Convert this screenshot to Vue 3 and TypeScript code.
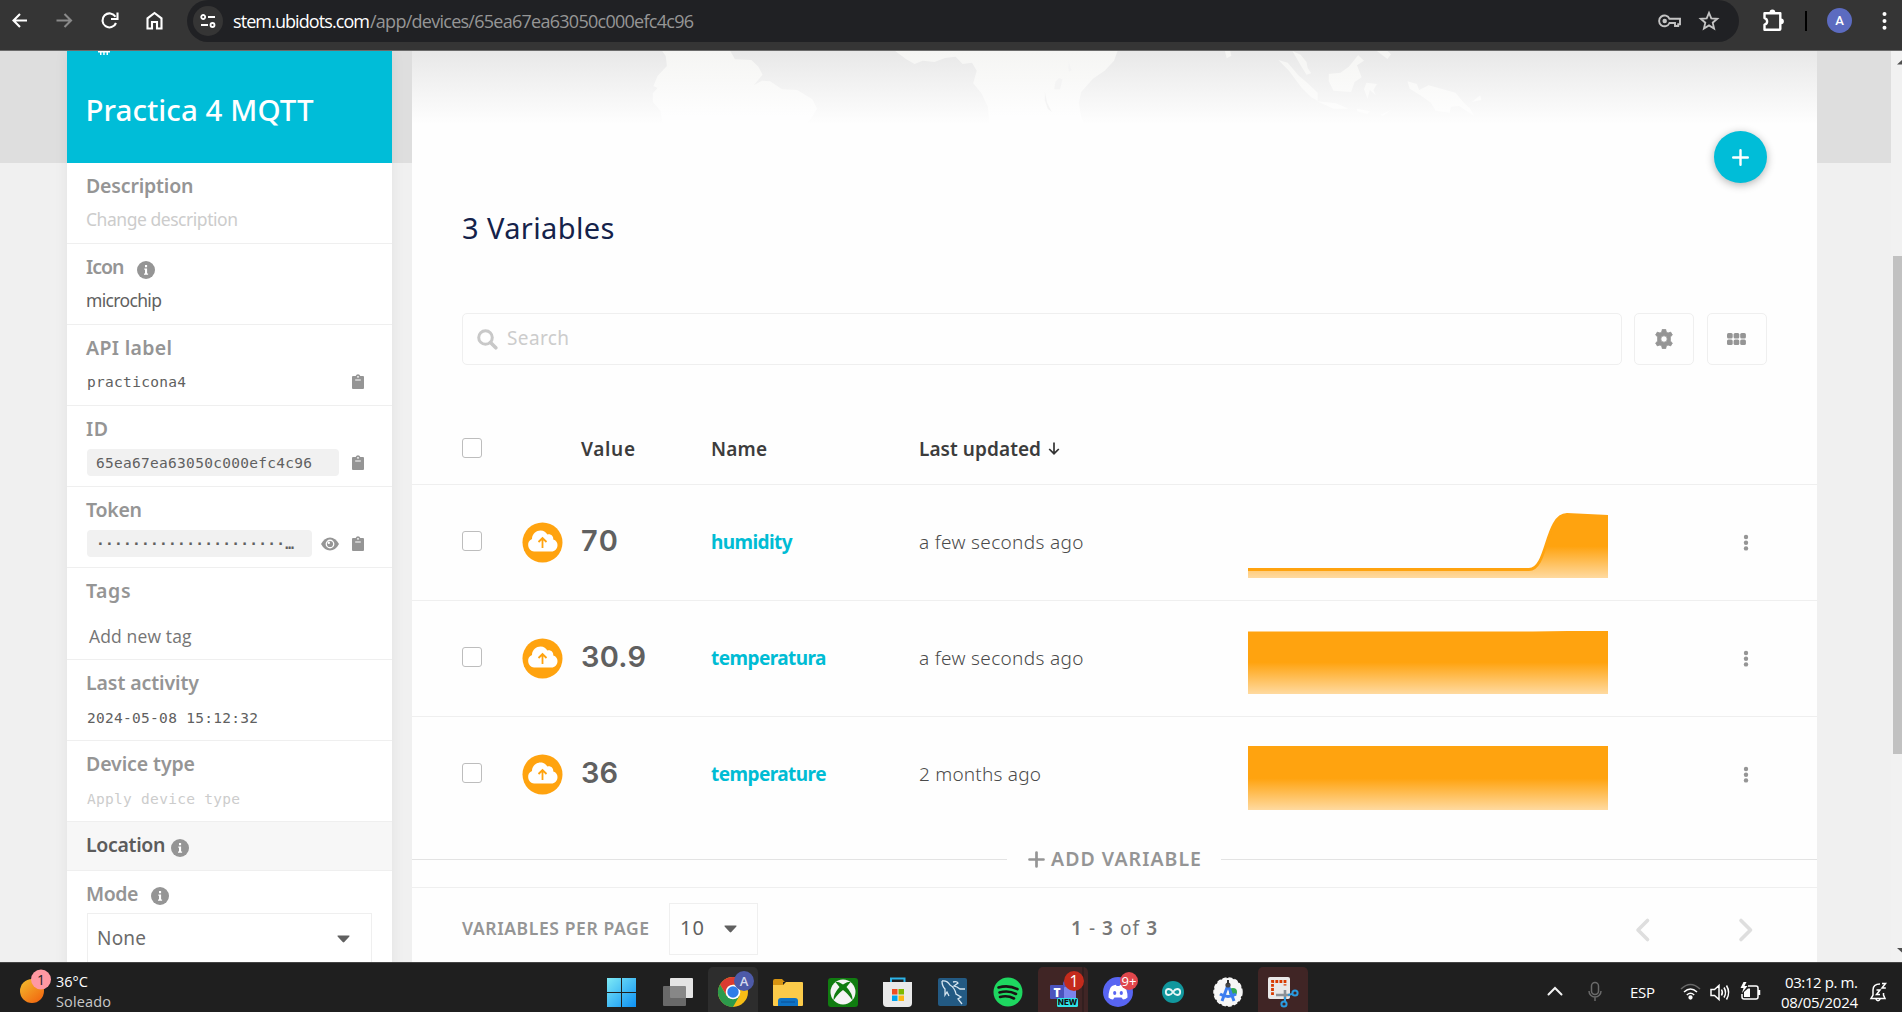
<script setup lang="ts">
interface Variable {
  value: string
  valueWidth: number
  name: string
  nameWidth: number
  updated: string
  updatedWidth: number
  area: string
  line: string
}

/* Tracks a label so that it fills the given width. */
const vFit = {
  mounted(el: HTMLElement, binding: { value: number }) {
    const count = (el.textContent ?? '').length
    if (count < 2) return
    const spacing = (binding.value - el.getBoundingClientRect().width) / (count - 1)
    el.style.letterSpacing = `${spacing.toFixed(3)}px`
    el.style.marginRight = `${(-spacing).toFixed(3)}px`
  },
}

const variables: Variable[] = [
  {
    value: '70', valueWidth: 37, name: 'humidity', nameWidth: 81.5, updated: 'a few seconds ago', updatedWidth: 164.5,
    area: 'M0 57.500H281C300 57.500 297 3 319 2.500L360 4.500V66H0Z',
    line: 'M0 57.500H281C300 57.500 297 3 319 2.500L360 4.500',
  },
  {
    value: '30.9', valueWidth: 65, name: 'temperatura', nameWidth: 115.5, updated: 'a few seconds ago', updatedWidth: 164.5,
    area: 'M0 5H285L320 4.500H360V66H0Z',
    line: 'M0 5H285L320 4.500H360',
  },
  {
    value: '36', valueWidth: 37, name: 'temperature', nameWidth: 115.5, updated: '2 months ago', updatedWidth: 122,
    area: 'M0 3.500H360V66H0Z',
    line: 'M0 3.500H360',
  },
]
</script>

<template>
  <div class="screen">
    <header class="toolbar">
      <svg class="nav" width="187" height="50" viewBox="0 0 187 50" fill="none" stroke="#fff" stroke-width="2.1">
        <path d="M27 20.500H14M20 14l-6.500 6.500L20 27" />
        <path d="M56.500 20.500H70M64.500 14l6.500 6.500-6.500 6.500" stroke="#8a8a8a" />
        <path d="M115.500 16.800A7 7 0 1 0 116 23" />
        <path d="M117.500 12.500v6.500h-6.500" />
        <path d="M147.500 28.500V18.300l7-5.300 7 5.300v10.200h-4.500v-6.500h-5v6.500z" />
      </svg>
      <div class="omnibox">
        <span class="site">
          <svg width="16" height="14" viewBox="0 0 16 14" fill="none" stroke="#fff" stroke-width="1.8">
            <circle cx="3.200" cy="3" r="2" /><path d="M8 3h7M1 11h7" /><circle cx="12.500" cy="11" r="2" />
          </svg>
        </span>
        <span v-fit="137" class="host">stem.ubidots.com</span><span v-fit="324" class="path">/app/devices/65ea67ea63050c000efc4c96</span>
        <svg class="key" width="24" height="14" viewBox="0 0 24 14" fill="none" stroke="#c4c4c4" stroke-width="1.900">
          <path d="M11.500 4.800H22v5.400h-1.800V12H17v-3h-5.500A5.400 5.400 0 1 1 11.500 4.800Z" /><circle cx="6.700" cy="6.900" r="1.300" fill="#c4c4c4" />
        </svg>
        <svg class="star" width="22" height="22" viewBox="0 0 22 22" fill="none" stroke="#c4c4c4" stroke-width="1.800">
          <path d="M11 2.800l2.300 5.500 6 .5-4.600 3.900 1.400 5.800-5.100-3.100-5.100 3.100 1.400-5.800-4.600-3.900 6-.5z" />
        </svg>
      </div>
      <svg class="tools" width="163" height="50" viewBox="0 0 163 50">
        <path d="M25.500 13.200h15.800v15.800q0 .8-.8.800H25.500v-5.100c3.500-1 3.500-5.600 0-6.600z" fill="none" stroke="#fff" stroke-width="2.400" stroke-linejoin="round" />
        <path d="M30.500 12.500a2.900 2.900 0 0 1 5.800 0zM42 18.400a2.900 2.900 0 0 1 0 5.800z" fill="#fff" />
        <rect x="66" y="11" width="2" height="20" fill="#000" />
        <circle cx="100.500" cy="20.500" r="12.500" fill="#5c6bc0" />
        <g fill="#fff"><circle cx="145.500" cy="14" r="2" /><circle cx="145.500" cy="21" r="2" /><circle cx="145.500" cy="27.700" r="2" /></g>
        <text x="100.500" y="25.300" text-anchor="middle" class="avatar">A</text>
      </svg>
    </header>

    <div class="page">
      <aside class="sidebar">
        <div class="device">
          <svg class="chip" width="14" height="4" viewBox="0 0 14 4" fill="#fff"><path d="M1 0h12v1.500H1zM3 1h1.500v3H3zM6.200 1h1.500v3H6.200zM9.500 1H11v3H9.500z" /></svg>
          <div class="device-name"><span v-fit="228">Practica 4 MQTT</span></div>
        </div>
        <section>
          <h4><span v-fit="107.5">Description</span></h4>
          <div class="val hint"><span v-fit="152">Change description</span></div>
        </section>
        <section>
          <h4><span v-fit="38.5">Icon</span><svg class="info far" width="18" height="18" viewBox="0 0 18 18"><circle cx="9" cy="9" r="9" fill="#959595" /><path d="M7.300 7.500h2.800v5h1v1.300H7v-1.300h1V8.800h-.7zM8 4h2.100v2.200H8z" fill="#fff" /></svg></h4>
          <div class="val"><span v-fit="76">microchip</span></div>
        </section>
        <section>
          <h4><span v-fit="86">API label</span></h4>
          <div class="val mono"><span v-fit="99" class="grow">practicona4</span>
            <svg class="clip" width="12" height="16" viewBox="0 0 12 16"><path d="M1 2h2.700a2.400 2.400 0 0 1 4.600 0H11q1 0 1 1v11q0 1-1 1H1q-1 0-1-1V3q0-1 1-1z" fill="#959595" /><circle cx="6" cy="2.800" r=".9" fill="#fff" /><path d="M3.200 6h5.600" stroke="#fff" /></svg>
          </div>
        </section>
        <section>
          <h4><span v-fit="22">ID</span></h4>
          <div class="val mono"><span class="pill"><span v-fit="216">65ea67ea63050c000efc4c96</span></span>
            <svg class="clip" width="12" height="16" viewBox="0 0 12 16"><path d="M1 2h2.700a2.400 2.400 0 0 1 4.600 0H11q1 0 1 1v11q0 1-1 1H1q-1 0-1-1V3q0-1 1-1z" fill="#959595" /><circle cx="6" cy="2.800" r=".9" fill="#fff" /><path d="M3.200 6h5.600" stroke="#fff" /></svg>
          </div>
        </section>
        <section>
          <h4><span v-fit="56">Token</span></h4>
          <div class="val mono"><span class="pill short"><span v-fit="198" class="secret">·····················…</span></span>
            <svg class="eye" width="18" height="14" viewBox="0 0 18 14"><path d="M0 7Q3.500.5 9 .5T18 7Q14.500 13.500 9 13.500T0 7z" fill="#959595" /><circle cx="9" cy="7" r="4.400" fill="#fff" /><circle cx="9" cy="7" r="3.100" fill="#959595" /><circle cx="7.800" cy="5.800" r="1.200" fill="#fff" /></svg>
            <svg class="clip" width="12" height="16" viewBox="0 0 12 16"><path d="M1 2h2.700a2.400 2.400 0 0 1 4.600 0H11q1 0 1 1v11q0 1-1 1H1q-1 0-1-1V3q0-1 1-1z" fill="#959595" /><circle cx="6" cy="2.800" r=".9" fill="#fff" /><path d="M3.200 6h5.600" stroke="#fff" /></svg>
          </div>
        </section>
        <section class="tags">
          <h4><span v-fit="44.5">Tags</span></h4>
          <div class="val tag"><span v-fit="102.5">Add new tag</span></div>
        </section>
        <section>
          <h4><span v-fit="113">Last activity</span></h4>
          <div class="val mono low"><span v-fit="171">2024-05-08 15:12:32</span></div>
        </section>
        <section>
          <h4><span v-fit="109">Device type</span></h4>
          <div class="val mono low hint"><span v-fit="153">Apply device type</span></div>
        </section>
        <section class="location">
          <h4><span v-fit="79.5">Location</span><svg class="info near" width="18" height="18" viewBox="0 0 18 18"><circle cx="9" cy="9" r="9" fill="#959595" /><path d="M7.300 7.500h2.800v5h1v1.300H7v-1.300h1V8.800h-.7zM8 4h2.100v2.200H8z" fill="#fff" /></svg></h4>
        </section>
        <section class="mode">
          <h4><span v-fit="52.5">Mode</span><svg class="info far up" width="18" height="18" viewBox="0 0 18 18"><circle cx="9" cy="9" r="9" fill="#959595" /><path d="M7.300 7.500h2.800v5h1v1.300H7v-1.300h1V8.800h-.7zM8 4h2.100v2.200H8z" fill="#fff" /></svg></h4>
          <div class="select"><span v-fit="49">None</span><svg width="13" height="8" viewBox="0 0 13 8"><path d="M1 .5h11q1 0 .4 1L7.300 7q-.8.900-1.600 0L.6 1.500Q0 .5 1 .5z" fill="#606060" /></svg></div>
        </section>
      </aside>

      <main class="panel">
        <svg class="map" width="1405" height="79" viewBox="0 0 1405 79">
          <defs>
            <linearGradient id="sea" x1="0" y1="0" x2="0" y2="1"><stop offset="0" stop-color="#e8e8e8" /><stop offset=".93" stop-color="#fefefe" /></linearGradient>
            <linearGradient id="land" gradientUnits="userSpaceOnUse" x1="0" y1="33" x2="0" y2="230"><stop offset="0" stop-color="#f5f5f3" /><stop offset="1" stop-color="#fefefe" /></linearGradient>
          </defs>
          <rect width="1405" height="79" fill="url(#sea)" />
          <g transform="translate(188 -11) scale(.5868 .3333)" fill="url(#land)">
            <path d="M106 33H222L230 58L258 60L270 80L277 104L262 136L276 122L290 124L310 148L336 150L362 178L370 206L360 235L346 262H108L103 212L90 186V160L98 144L91 138L98 108L114 78L112 48z" />
            <path d="M503 33H882L876 62L860 92L840 116L820 156L816 190L820 230L828 262H664L661 200L650 160L636 130L642 92L634 68L618 72L606 50L588 54L570 66L550 62L536 72L522 58z" />
            <path d="M1156 60L1172 68L1190 106L1206 130L1223 158V182L1212 172L1196 144L1174 92zM1180 33L1194 44L1204 66L1206 84L1212 100L1204 104L1194 76zM1292 46L1302 62L1290 76L1298 112L1286 126L1280 156L1250 152L1242 124V102L1262 98L1276 80zM1222 184L1254 190L1276 206L1250 206zM1306 128L1324 132L1318 150L1322 166L1312 150L1308 176L1302 148zM1376 124L1392 132L1396 150L1412 136L1458 158L1472 188L1482 204L1490 228L1464 198L1450 200L1448 218L1424 212L1416 188L1398 166L1380 146zM1324 33h18l6 10-6 14zM1065 33h9l2 14-8 8zM1290 206l22 8-4 8-18-8zM1348 210l-18 14 4 4zM1500 166l2 14-16 6z" />
          </g>
          <g transform="translate(188 -11) scale(.5868 .3333)" fill="#f4f4f4"><path d="M799 66l4 24-3 6-2-12zM782 114l6 4-4 30-10 0 2-22zM758 154l4 34 8 28-7-10-5-26z" /></g>
        </svg>
        <button class="fab" aria-label="Add"><svg width="17" height="17" viewBox="0 0 17 17" stroke="#fff" stroke-width="2.400" stroke-linecap="round"><path d="M8.500 1.200v14.600M1.200 8.500h14.600" /></svg></button>
        <h1><span v-fit="152.5">3 Variables</span></h1>

        <div class="searchbar">
          <div class="search">
            <svg width="21" height="21" viewBox="0 0 21 21" fill="none" stroke="#c8c8c8"><circle cx="8.500" cy="8.500" r="6.800" stroke-width="3" /><path d="M13.500 13.500l5.300 5.300" stroke-width="3.600" stroke-linecap="round" /></svg>
            <span v-fit="62">Search</span>
          </div>
          <div class="square gear">
            <svg width="20" height="20" viewBox="0 0 20 20" fill="#959595"><path fill-rule="evenodd" d="M8.300.3h3.400l.6 2.700 1.700 1 2.700-.9 1.700 2.900-2.100 1.900.1 2.100-.1 2.100 2.100 1.900-1.700 2.900-2.700-.9-1.700 1-.6 2.700H8.300L7.700 17 6 16l-2.700.9L1.600 14l2.100-1.900L3.600 10l.1-2.100L1.600 6l1.700-2.900L6 4l1.700-1zM10 6.800a3.200 3.200 0 1 0 0 6.400 3.200 3.200 0 0 0 0-6.400z" stroke="#959595" stroke-width=".8" stroke-linejoin="round" /></svg>
          </div>
          <div class="square">
            <svg class="grid-icon" width="19" height="12" viewBox="0 0 19 12" fill="#959595"><rect width="5.700" height="5.500" rx="1.500" /><rect x="6.600" width="5.700" height="5.500" rx="1.500" /><rect x="13.200" width="5.700" height="5.500" rx="1.500" /><rect y="6.500" width="5.700" height="5.500" rx="1.500" /><rect x="6.600" y="6.500" width="5.700" height="5.500" rx="1.500" /><rect x="13.200" y="6.500" width="5.700" height="5.500" rx="1.500" /></svg>
          </div>
        </div>

        <div class="row head">
          <i class="check"></i><span></span>
          <b><span v-fit="54">Value</span></b>
          <b><span v-fit="56">Name</span></b>
          <b><span v-fit="122">Last updated</span><svg class="sort" width="12" height="13" viewBox="0 0 12 13" fill="none" stroke="#333" stroke-width="1.700"><path d="M6 .5v11M1.200 7l4.800 4.700L10.800 7" /></svg></b>
        </div>
        <div v-for="v in variables" :key="v.name" class="row">
          <i class="check"></i>
          <svg class="cloud" width="41" height="41" viewBox="0 0 41 41">
            <circle cx="20.500" cy="20.500" r="20" fill="#ffa30f" />
            <path d="M12 29.500a6.500 6.500 0 0 1-2-12.400C10 11.500 14.500 8.500 18.500 8.500c3.500 0 5.600 1.700 6.800 4 3.600-.8 6.200 1.600 6 4.900 2.800.8 4.200 3 4.200 5.600 0 4-2.800 6.500-6 6.500z" fill="#fff" />
            <path d="M20.500 26V16.500M16.500 20l4-4 4 4" fill="none" stroke="#ffa30f" stroke-width="1.800" />
          </svg>
          <span class="number"><span v-fit="v.valueWidth">{{ v.value }}</span></span>
          <span class="name"><span v-fit="v.nameWidth">{{ v.name }}</span></span>
          <span class="updated"><span v-fit="v.updatedWidth">{{ v.updated }}</span></span>
          <svg class="chart" width="360" height="66" viewBox="0 0 360 66">
            <defs><linearGradient id="fade" gradientUnits="userSpaceOnUse" x1="0" y1="0" x2="0" y2="66"><stop offset=".52" stop-color="#ffa30f" /><stop offset="1" stop-color="#ffdaa0" /></linearGradient></defs>
            <path :d="v.area" fill="url(#fade)" /><path :d="v.line" fill="none" stroke="#ffa30f" stroke-width="2.800" />
          </svg>
          <svg class="dots" width="6" height="18" viewBox="0 0 6 18" fill="#959595"><circle cx="3" cy="3" r="2.200" /><circle cx="3" cy="8.700" r="2.200" /><circle cx="3" cy="14.400" r="2.200" /></svg>
        </div>

        <div class="add">
          <i class="rule left"></i>
          <svg width="17" height="17" viewBox="0 0 17 17" stroke="#959595" stroke-width="2.700" stroke-linecap="round"><path d="M8.500 1.500v14M1.500 8.500h14" /></svg>
          <span v-fit="150">ADD VARIABLE</span>
          <i class="rule right"></i>
        </div>
        <footer class="pager">
          <span class="per"><span v-fit="187">VARIABLES PER PAGE</span></span>
          <div class="amount"><span v-fit="24">10</span><svg width="13" height="8" viewBox="0 0 13 8"><path d="M1 .5h11q1 0 .4 1L7.300 7q-.8.900-1.600 0L.6 1.500Q0 .5 1 .5z" fill="#606060" /></svg></div>
          <span class="range"><span v-fit="86"><b>1</b> - <b>3</b> of <b>3</b></span></span>
          <svg class="arrows" width="120" height="26" viewBox="0 0 120 26" fill="none" stroke="#dedede" stroke-width="3.600" stroke-linecap="round" stroke-linejoin="round"><path d="M13.500 3.500L4 13l9.500 9.500M107 3.500l9.500 9.500-9.500 9.500" /></svg>
        </footer>
      </main>

      <div class="scroll">
        <svg width="11" height="14" viewBox="0 0 11 14"><path d="M6 13.500h5V9z" fill="#505050" /></svg>
        <i class="thumb"></i>
        <svg class="down" width="11" height="14" viewBox="0 0 11 14"><path d="M6 0h5v4.500z" fill="#505050" /></svg>
      </div>
    </div>

    <div class="taskbar">
      <div class="weather">
        <svg width="38" height="38" viewBox="0 0 38 38">
          <defs><linearGradient id="sun" x1="0" y1="0" x2=".8" y2="1"><stop offset="0" stop-color="#f3c02f" /><stop offset="1" stop-color="#f2660f" /></linearGradient></defs>
          <circle cx="17" cy="24" r="12" fill="url(#sun)" /><circle cx="26" cy="12.500" r="10" fill="#ff98a2" />
          <text x="26" y="17.500" text-anchor="middle" class="badge dark">1</text>
        </svg>
        <div class="forecast"><span v-fit="32">36°C</span><span v-fit="55" class="dim">Soleado</span></div>
      </div>

      <div class="apps">
        <div class="app"><svg viewBox="-25 -25 50 50">
          <defs><linearGradient id="win" gradientUnits="userSpaceOnUse" x1="-15" y1="-15" x2="14" y2="15"><stop offset="0" stop-color="#7eeaf5" /><stop offset="1" stop-color="#0b8ff5" /></linearGradient></defs>
          <path d="M-16-14h14V0h-14zM-1-14h14V0H-1zM-16 1h14v14h-14zM-1 1h14v14H-1z" fill="url(#win)" /></svg></div>
        <div class="app"><svg viewBox="-25 -25 50 50"><rect x="-8" y="-14" width="23" height="20" rx="1" fill="#e4e4e4" /><rect x="-15" y="-6" width="23" height="20" rx="1" fill="#777" fill-opacity=".85" /></svg></div>
        <div class="app lit"><svg viewBox="-25 -25 50 50">
          <circle r="15" fill="#f6bd16" /><path d="M-13-7.500A15 15 0 0 1 13-7.500H0L-6.500 3.500z" fill="#db3b30" /><path d="M-13-7.500A15 15 0 0 0 0 15L6.500 3.700H-6.500z" fill="#2c9a4b" />
          <circle r="7.300" fill="#fff" /><circle r="5.700" fill="#2f7de9" /><circle cx="11" cy="-11" r="10" fill="#4d5aa8" />
          <text x="11" y="-6.500" text-anchor="middle" class="badge soft">A</text></svg></div>
        <div class="app"><svg viewBox="-25 -25 50 50"><path d="M-15-11q0-2 2-2h7l3 3h-2v6h-10z" fill="#d79411" /><path d="M-15-7h10l3-3h16q1 0 1 1v22q0 1-1 1h-28q-1 0-1-1z" fill="#fbcb4a" /><path d="M-10 14V9q0-3 3-3H7q3 0 3 3v5z" fill="#0e72c4" /><path d="M-7 10H7" stroke="#0a4f94" /></svg></div>
        <div class="app"><svg viewBox="-25 -25 50 50"><rect x="-15" y="-14" width="30" height="29" rx="3" fill="#107c10" /><circle r="12.500" fill="#f4f4f4" /><path d="M-8-10.500Q-4-10.500 0-7.500 4-10.500 8-10.500L3.500-5Q10 2 9.500 8.500 5 1.500 0-2-5 1.500-9.500 8.500-10 2-3.500-5z" fill="#107c10" /></svg></div>
        <div class="app"><svg viewBox="-25 -25 50 50"><path d="M-7-9v-4.500h13.500V-9" fill="none" stroke="#2cb4e8" stroke-width="2" /><path d="M-15-10h29v21q0 4-4 4h-21q-4 0-4-4z" fill="#e9e9e9" /><path d="M-6-3h5.500v5.500H-6z" fill="#f04e23" /><path d="M.5-3H6v5.500H.5z" fill="#7fb900" /><path d="M-6 3.500h5.500V9H-6z" fill="#00a3ee" /><path d="M.5 3.500H6V9H.5z" fill="#fdb813" /></svg></div>
        <div class="app"><svg viewBox="-25 -25 50 50"><rect x="-15" y="-14" width="29" height="28" rx="2" fill="#235a83" /><path d="M-11-11q5-1 8 4 5 3 6 9l5 3-3 2 4 5M-11-11q0 5 3 8l0 6 2-3 2 4M0-10q4-1 5 1l-4 3 3 1 3 2h5" fill="none" stroke="#d7e6f0" stroke-width="1.300" /></svg></div>
        <div class="app"><svg viewBox="-25 -25 50 50"><circle r="14.500" fill="#1ed760" /><path d="M-9.500-4.500q10-3 19 1.700M-8.500.5q9-2.600 16.500 1.500M-8 5q7.500-2 14 1.500" fill="none" stroke="#191414" stroke-width="2.600" stroke-linecap="round" /></svg></div>
        <div class="app alert"><svg viewBox="-25 -25 50 50"><path d="M20-25V25" stroke="#241a1a" /><circle cx="5" cy="-8" r="5" fill="#5059c9" /><rect x="0" y="-5" width="13" height="15" rx="2" fill="#7b83eb" /><rect x="-13" y="-7" width="14" height="14" rx="1" fill="#4b53bc" /><text x="-6" y="4.500" text-anchor="middle" class="badge bold">T</text><rect x="-6" y="6" width="21" height="9" rx="1.500" fill="#2fe4e8" /><text x="4.500" y="13.400" text-anchor="middle" class="new">NEW</text><circle cx="11" cy="-11" r="10" fill="#c42b1c" /><text x="11" y="-5.500" text-anchor="middle" class="badge">1</text></svg></div>
        <div class="app"><svg viewBox="-25 -25 50 50"><circle r="15" fill="#5865f2" /><path d="M-9.500 5.500Q-9.500-3-6-6q2-1 4-1.200L-1.500-6h3L2-7.200q2 .2 4 1.200 3.500 3 3.500 11.500-2 2-4.500 2L3.500 5.500h-7L-5 7.500q-2.500 0-4.500-2z" fill="#fff" /><ellipse cx="-3.300" cy="1" rx="1.600" ry="1.900" fill="#5865f2" /><ellipse cx="3.300" cy="1" rx="1.600" ry="1.900" fill="#5865f2" /><circle cx="11" cy="-11" r="9" fill="#e0474c" /><text x="11" y="-6.500" text-anchor="middle" class="badge small">9+</text></svg></div>
        <div class="app"><svg viewBox="-25 -25 50 50"><circle r="11" fill="#11979d" /><path d="M0 0q-2-3-4.200-3a3 3 0 0 0 0 6Q-2 3 0 0t4.200-3a3 3 0 0 1 0 6Q2 3 0 0z" fill="none" stroke="#e8f6f6" stroke-width="1.800" /></svg></div>
        <div class="app"><svg viewBox="-25 -25 50 50"><circle r="14" fill="#f7f7f7" stroke="#f7f7f7" stroke-width="1.500" stroke-dasharray="4 2" /><circle cx="5" cy="0" r="4" fill="#34a853" /><path d="M-6 9L0-7 6 9M-8 2Q0 7 8 2" fill="none" stroke="#3a7df0" stroke-width="3" /><circle cy="-7" r="2.600" fill="#444" /><path d="M0-12v4" stroke="#333" stroke-width="2" /></svg></div>
        <div class="app alert"><svg viewBox="-25 -25 50 50"><rect x="-15" y="-15" width="22" height="22" rx="2" fill="#e9e9e9" /><path d="M-10.500 3v-13.500H2v4" fill="none" stroke="#d83b01" stroke-width="2.800" stroke-dasharray="2.800 1.300" /><path d="M2-2V7M-7 3H7" stroke="#8b9197" stroke-width="2.600" /><circle cx="1" cy="12" r="2.600" fill="none" stroke="#2a9be0" stroke-width="2" /><circle cx="12" cy="1" r="2.600" fill="none" stroke="#2a9be0" stroke-width="2" /><path d="M2 9V5M9 2L5 3" stroke="#2a9be0" stroke-width="2" /></svg></div>
      </div>

      <div class="tray">
        <svg width="66" height="30" viewBox="0 0 66 30" fill="none"><path d="M2.500 17.500l6.500-6.500 6.500 6.500" stroke="#f2f2f2" stroke-width="2" stroke-linecap="round" /><rect x="45.500" y="5.500" width="7" height="12" rx="3.500" stroke="#6a6a6a" stroke-width="1.500" /><path d="M43 14a6 6 0 0 0 12 0M49 20v4" stroke="#6a6a6a" stroke-width="1.500" /></svg>
        <span class="lang"><span v-fit="25">ESP</span></span>
        <svg class="status" width="82" height="30" viewBox="0 0 82 30" fill="none" stroke="#fff" stroke-width="1.500">
          <path d="M1 12q9.500-9 19 0" stroke="#666" /><path d="M4 15q6.500-6 13 0M6.800 18q3.700-3.400 7.400 0" /><circle cx="10.500" cy="20.500" r="1.400" fill="#fff" />
          <path d="M31 12.500h3.500l4.500-4v14l-4.500-4H31zM41.500 12.500q1.700 3 0 6M44 10.500q3 5 0 10M46.500 8.500q4.200 7 0 14" />
          <path d="M68 9h8q2 0 2 2v9q0 2-2 2H64q-2 0-2-2v-3M79.500 13v5" /><path d="M64 19v-4l4-3.500h2V20h-6z" fill="#fff" stroke="none" /><path d="M63.500 5l-3 6h3l-1.500 5 5.500-7h-3l2-4z" fill="#fff" stroke="none" />
        </svg>
        <div class="clock"><span v-fit="73">03:12 p. m.</span><span v-fit="77">08/05/2024</span></div>
        <svg class="bell" width="20" height="22" viewBox="0 0 20 22" fill="none" stroke="#fff" stroke-width="1.500"><path d="M11 3Q4 3 4 9v5l-2 3.500h14L14.500 14v-2M6.500 17.500q2.500 4.500 5 0" /><path d="M7.500 9h3.500l-3.500 4.500H11M13 2.500h3.500L13 7h3.800" /></svg>
      </div>
    </div>
  </div>
</template>

<style>
body { margin: 0; overflow: hidden; }
</style>

<style scoped>
* { box-sizing: border-box; }
svg { display: block; flex: none; }
.screen { width: 1902px; height: 1012px; display: flex; flex-direction: column; overflow: hidden; font-family: "Noto Sans", "Open Sans", sans-serif; color: #606060; white-space: nowrap; }
.screen span { display: inline-block; }
h1, h4 { margin: 0; }

.toolbar { height: 51px; display: flex; background: #353535; border-bottom: 1px solid #6b6b6b; flex: none; }
.omnibox { width: 1552px; height: 42px; border-radius: 21px; background: #202124; display: flex; align-items: center; font: 18px/42px "Open Sans", sans-serif; }
.omnibox .site { width: 30px; height: 30px; margin: 0 10px 0 6px; border-radius: 50%; background: #353535; display: flex; align-items: center; justify-content: center; }
.host { color: #fff; }
.path { color: #969696; }
.key { margin-left: auto; }
.star { margin: 0 19px 0 16px; }
.avatar { font: 500 13px Roboto, sans-serif; fill: #fff; }

.page { height: 911px; display: flex; flex: none; overflow: hidden; background: linear-gradient(#dedede 112px, #f0f0f0 112px); }
.sidebar { width: 325px; height: 1000px; margin: 0 20px 0 67px; background: #fff; box-shadow: 0 0 14px rgba(0, 0, 0, .06); }
.device { height: 112px; padding-left: 18.500px; background: #00bdd8; color: #fff; }
.chip { margin-left: 11px; }
.device-name { margin-top: 35px; font-size: 29.500px; line-height: 40px; font-weight: 500; }
section { height: 81px; padding: 8px 20px 0 19px; border-bottom: 1px solid #efefef; }
h4 { height: 30px; display: flex; align-items: flex-start; font-size: 19.500px; line-height: 30px; font-weight: 600; color: #959595; }
.info { margin-top: 9px; }
.far { margin-left: 12.500px; }
.near { margin-left: 5.500px; }
.up { margin-top: 8px; }
.val { height: 27px; margin-top: 5px; display: flex; align-items: center; font-size: 17.500px; line-height: 25px; }
.val > span { margin-top: -1px; }
.mono { font-family: "DejaVu Sans Mono", monospace; font-size: 14.500px; padding-left: 1px; }
.val.mono > span { margin-top: 0; }
.val.mono > .grow { margin-top: 1px; }
.low { padding-top: 3px; }
.hint { color: #ccc; }
.pill { width: 252px; height: 27px; padding-left: 9px; border-radius: 4px; background: #f1f1f1; line-height: 28px; }
.pill.short { width: 225px; }
.secret { font-weight: 700; }
.clip { margin-left: auto; margin-right: 8px; }
.eye { margin-left: 9px; }
.tags { height: 92px; }
.tag { margin-top: 17px; padding-left: 3px; font-family: "Open Sans", sans-serif; font-size: 17.500px; color: #757575; }
.location { height: 49px; background: #f7f7f7; }
.location h4 { color: #5c5c5c; }
.mode { border: 0; }
.select { width: 285px; height: 52px; margin: 4px 0 0 1px; padding: 0 21px 0 9px; border: 1px solid #efefef; display: flex; align-items: center; justify-content: space-between; font-size: 19px; color: #6b6b6b; }
.select span { margin-top: -3px; }

.panel { position: relative; width: 1405px; height: 912px; background: #fefefe; flex: none; }
.fab { position: absolute; left: 1302px; top: 80px; width: 53px; height: 52px; border: 0; border-radius: 50%; background: #00bdd8; box-shadow: 0 2px 8px rgba(0, 0, 0, .3); display: flex; align-items: center; justify-content: center; }
h1 { margin: 80px 0 67px 50px; font-size: 29px; line-height: 36px; font-weight: 400; color: #14224a; }
.searchbar { display: flex; margin-left: 50px; height: 52px; }
.search { width: 1160px; display: flex; align-items: center; padding-left: 14px; border: 1px solid #efefef; border-radius: 5px; font-size: 19px; color: #ccc; }
.search span { margin: -3px 0 0 9px; }
.square { width: 60px; margin-left: 13px; border: 1px solid #efefef; border-radius: 5px; display: flex; align-items: center; justify-content: center; }
.gear { margin-left: 12px; }
.grid-icon { margin: -1px 2px 0 0; }
.row { height: 116px; display: grid; grid-template-columns: 60px 59px 130px 208px 329px 360px 209px; padding-left: 50px; align-items: center; border-bottom: 1px solid #efefef; }
.row:nth-last-child(3) { border-color: transparent; }
.head { height: 120px; padding-top: 47px; color: #3c3c3c; font-size: 19px; font-weight: 600; }
.head b { font-weight: 600; display: flex; align-items: center; padding-top: 1px; }
.sort { margin-left: 7px; }
.check { width: 20px; height: 20px; border: 1.400px solid #bdbdbd; border-radius: 3px; position: relative; top: -2px; background: #fff; }
.head .check { top: 0; }
.cloud { margin-left: -.5px; }
.number { font: 600 29px/36px Inter, sans-serif; margin-top: -3px; }
.name { font-size: 19px; font-weight: 700; color: #00bcd4; margin-top: -1px; }
.updated { font-size: 19px; font-weight: 300; color: #4a4a4a; margin-top: -1px; }
.chart { margin-top: 4px; }
.dots { margin-left: 135px; }
.add { height: 55px; display: flex; align-items: center; border-bottom: 1px solid #efefef; padding-bottom: 1px; font-size: 19.500px; font-weight: 600; color: #959595; }
.add span { margin: -2px 0 0 6px; }
.rule { height: 1px; background: #e3e3e3; }
.left { width: 595px; margin-right: 21px; }
.right { flex: 1; margin-left: 20px; }
.pager { height: 82px; display: flex; align-items: center; font-size: 19px; }
.per { width: 207px; margin: -3px 0 0 50px; font-size: 17.500px; font-weight: 600; color: #959595; }
.amount { width: 89px; height: 52px; border: 1px solid #efefef; padding: 0 20px 0 10px; display: flex; align-items: center; justify-content: space-between; font-size: 20px; }
.amount span { margin-top: -3px; }
.range { width: 84px; margin: -3px 0 0 313px; color: #777; }
.range b { font-weight: 600; }
.arrows { margin-left: 479px; margin-top: 1px; }
.scroll { width: 11px; height: 911px; margin-left: auto; background: #f1f1f1; display: flex; flex-direction: column; align-items: flex-end; }
.thumb { width: 9px; height: 499px; margin-top: 191px; background: #c1c1c1; }
.down { margin-top: 194px; }

.taskbar { height: 50px; display: flex; background: #1f1f1f; border-top: 1px solid #444; color: #fff; font-family: "Open Sans", sans-serif; flex: none; }
.weather { width: 598px; padding: 4px 0 0 15px; display: flex; }
.forecast { display: flex; flex-direction: column; align-items: flex-start; margin: 5px 0 0 3px; font-size: 14.500px; line-height: 20px; }
.dim { color: #c9c9c9; }
.badge { font: 16px "Open Sans", sans-serif; fill: #fff; }
.dark { fill: #222; font-size: 14px; }
.soft { fill: #d5d9ee; font-weight: 600; font-size: 13px; }
.bold { font-weight: 800; font-size: 12px; }
.small { font-size: 13px; }
.new { font: 800 8px Inter, sans-serif; fill: #111; }
.apps { width: 722px; height: 45px; margin-top: 4px; display: flex; gap: 5px; overflow: hidden; }
.app { width: 50px; height: 50px; border-radius: 5px; }
.app svg { width: 50px; height: 50px; }
.lit { background: #2d2d2d; }
.alert { background: #402525; }
.tray { flex: 1; margin-left: 226px; display: flex; align-items: flex-start; padding-top: 14px; font-size: 15px; line-height: 20px; }
.lang { width: 36px; margin: 5px 0 0 18px; }
.status { margin-left: 14px; }
.clock { width: 77px; margin: -5px 0 0 19px; display: flex; flex-direction: column; align-items: flex-end; }
.bell { margin: 4px 0 0 11px; }
</style>
